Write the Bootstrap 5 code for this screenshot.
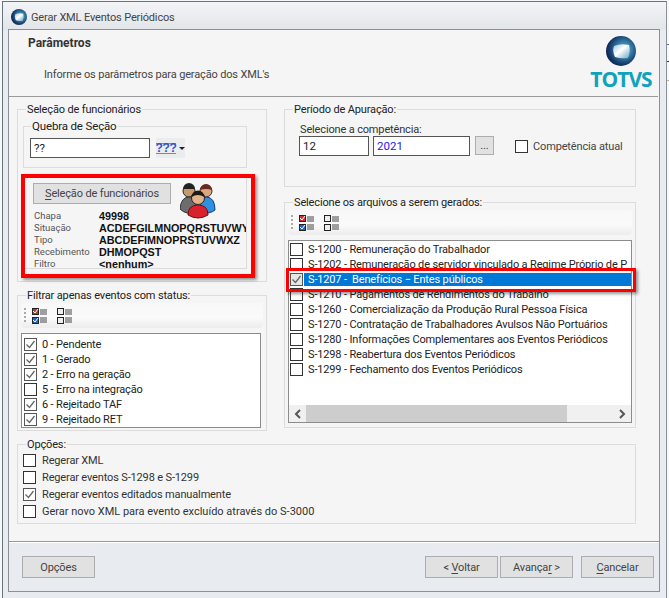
<!DOCTYPE html>
<html lang="pt-BR">
<head>
<meta charset="utf-8">
<title>Gerar XML Eventos Periódicos</title>
<link href="https://cdn.jsdelivr.net/npm/bootstrap@5.3.0/dist/css/bootstrap.min.css" rel="stylesheet">
<style>
html,body{height:598px;overflow:hidden}
body{background-color:#f7f8f9;background-image:linear-gradient(#5a6fb0,#5a6fb0),linear-gradient(#333,#333),linear-gradient(#c9b28a,#c9b28a);background-repeat:no-repeat;background-size:3px 1px;background-position:666px 44px,666px 61px,666px 80px;font-family:Roboto,"Liberation Sans",sans-serif;font-size:11px;letter-spacing:-.15px;line-height:15px;color:#2a2a2a}
.win{width:665px;height:620px;margin:1px 0 0 2px;border:1px solid #69737d;border-right-color:#8a9198;background:linear-gradient(#f3f4f6,#e2e5e9 28px,#e8ebf0 28px);padding-left:5px;position:relative}
.ttl{height:27px;display:flex;align-items:center;gap:4px;padding-left:3px;padding-top:3px;color:#444}
.frm{width:652px;height:563px;border:1px solid #8c8f93;display:flex;flex-direction:column}
.pan{height:512px;flex:none;background:#f5f5f5;border-bottom:1px solid #999;box-shadow:0 1px 0 #fff;display:flex;flex-direction:column}
.hdr{height:67px;flex:none;border-bottom:1px solid #9a9a9a;display:flex;justify-content:space-between;padding:6px 6px 0 19px;margin-right:1px}
.hdr b{font-size:12px;letter-spacing:0;color:#333;display:block}
.hdr p{margin:16px 0 0 16px;color:#444}
.brand{width:62px;display:flex;flex-direction:column;align-items:center;color:#0ea2bd;font:700 21px/18px "Open Sans",sans-serif;letter-spacing:-1px}
.bdy{display:flex;gap:17px;padding:5px 0 0 8px}
.cl{width:250px;flex:none}.cr{width:352px;flex:none}
fieldset.grp{border:1px solid #dcdcdc;padding:0;margin:0}
fieldset.grp>legend{float:none;width:auto;font-size:11px;line-height:15px;margin:0 0 0 8px;padding:0 1px;color:#222}
.g1{height:180px}.g2{height:143px;margin-top:6px!important}
.g3{height:85px}.g4{height:233px;margin-top:8px!important}
.g5{height:87px;width:619px;margin:6px 0 0 8px!important}
.g11{height:49px;margin:2px 0 0 5px!important;width:224px}
.g11 legend{font-size:11.5px!important;margin-left:7px!important}
.inp{height:20px;border:1px solid #555;border-radius:0;background:#fff;font-size:11.5px;line-height:17px;padding:0 3px;color:#222;min-height:0;box-shadow:none}
.qline{display:flex;gap:6px;padding:4px 0 0 6px}
.qbtn{width:29px;height:20px;background:#ebecee;display:flex;align-items:center;justify-content:center;gap:3px;font:700 12px/11px "Liberation Sans",sans-serif;color:#2f55c4;padding:0}
.qbtn span{border-top:1px solid #6b88d6;border-bottom:1px solid #6b88d6;line-height:9px;letter-spacing:-.4px}
.qbtn i{border:3px solid transparent;border-top:3px solid #222;border-bottom:0;width:0;height:0}
.sel{width:224px;height:95px;margin:6px 0 0 5px;border-right:1px solid #dcdcdc;border-bottom:1px solid #dcdcdc;overflow:hidden;padding:9px 0 0 10px}
.selt{display:flex;gap:9px;height:29px;align-items:flex-start}
.bx{border:1px solid #adadad;background:#e1e1e1;border-radius:0;color:#444;font-size:11px;letter-spacing:-.15px;line-height:15px;padding:0;--bs-btn-hover-bg:#e1e1e1}
.bsel{width:138px;height:21px}
.info{margin:-2px 0 0 1px;white-space:nowrap;font-size:9.5px;line-height:12px;letter-spacing:0}
.info>div{display:flex}
.info span{width:65px;flex:none;color:#555}
.info b{font:700 10.8px/12px "Liberation Sans",sans-serif;color:#111}
.tb{height:25px;margin:0 3px;border-radius:4px;background:linear-gradient(#f8f8f8,#fafafa 60%,#ececec);display:flex;align-items:center;gap:6px;padding-left:3px}
.tb .grip{width:2px;height:15px;background:repeating-linear-gradient(#aaa 0 2px,transparent 2px 4px)}
.tb .unc{margin-left:3px}
.lst{background:#fff;border:1px solid #8c8c8c;list-style:none;margin:0;padding:3px 0 0 2px;overflow:hidden;white-space:nowrap}
.lst li{height:15px;display:flex;align-items:center;gap:5px;color:#222}
.l1{height:95px;margin:5px 5px 0 3px}
.l2{height:183px;margin:5px 3px 0 3px;display:flex;flex-direction:column;padding:0}
.l2 ul{list-style:none;margin:0;padding:1px 0 0 1px;flex:1;overflow:hidden}
.form-check-input.ck{flex:none;width:13px;height:13px;margin:0;border:1px solid #333;border-radius:0;background-color:#fff;box-shadow:none;opacity:1}
.form-check-input.ck:checked{background-color:#fff;border-color:#555;background-size:11px;background-image:url("data:image/svg+xml,%3Csvg xmlns='http://www.w3.org/2000/svg' viewBox='0 0 11 11'%3E%3Cpath d='M1.5 5.500l3 3 5-6.500' fill='none' stroke='%23666' stroke-width='1.3'/%3E%3C/svg%3E")}
.form-check-input.ck.hl:checked{background-color:#e6e6e6}
.on{background:#0078d7;color:#fff;flex:1;padding-left:4px;height:13px;line-height:13px}
.scr{height:17px;flex:none;background:#f0f0f0;display:flex;align-items:center;color:#555}
.scr svg{flex:none;margin:0 5px}
.scr .thm{width:261px;height:17px;background:#cdcdcd;margin:0 auto 0 -1px}
.per{display:flex;gap:4px;padding:0 0 0 14px}
.cap{margin:5px 0 0 15px;padding:0;height:14px;color:#333}
.per label{white-space:nowrap;display:flex;align-items:center;gap:5px;margin-left:17px;height:20px;color:#444}
.opt{padding:0 0 0 5px}
.opt label{display:flex;align-items:center;gap:6px;height:17px;color:#333}
.opt .wide{letter-spacing:0}
.ftr{display:flex;flex:1;padding:14px 5px 0 13px}
.ftr .bx{width:73px;height:22px}
.mk{position:absolute;border:4px solid #f00;box-shadow:2px 2px 3px rgba(0,0,0,.4);pointer-events:none}
.m1{left:18px;top:172px;width:234px;height:104px}
.m2{left:283px;top:266px;width:350px;height:24px;border-width:3px}
u{text-underline-offset:2px}
</style>
</head>
<body>
<svg width="0" height="0" class="d-block" style="height:0">
<defs>
<radialGradient id="sph" cx=".6" cy=".45" r=".65"><stop offset=".35" stop-color="#3a86ad"/><stop offset=".75" stop-color="#163a6b"/><stop offset="1" stop-color="#0b1c3f"/></radialGradient>
<linearGradient id="sq" x1="0" y1="0" x2="1" y2="1"><stop offset="0" stop-color="#9fc3d8"/><stop offset=".45" stop-color="#fff"/><stop offset="1" stop-color="#6aa6c6"/></linearGradient>
<symbol id="orb" viewBox="0 0 30 30"><circle cx="15" cy="15" r="15" fill="url(#sph)"/><path d="M8 10Q15 7 23 9Q25 15 22 22Q15 23 9 21Q6 15 8 10Z" fill="url(#sq)"/></symbol>
<symbol id="chk" viewBox="0 0 16 16"><rect x=".5" y=".5" width="6" height="6" fill="#c33" stroke="#222"/><path d="M1 3l2 2 3-4" fill="none" stroke="#fff"/><rect x=".5" y="9.500" width="6" height="6" fill="#26c" stroke="#222"/><path d="M1 12l2 2 3-4" fill="none" stroke="#fff"/><path d="M8 2h7M8 4h7M8 6h7M8 10h7M8 12h7M8 14h7" stroke="#444"/></symbol>
<symbol id="unc" viewBox="0 0 16 16"><rect x=".5" y=".5" width="6" height="6" fill="#eee" stroke="#222"/><rect x=".5" y="9.500" width="6" height="6" fill="#eee" stroke="#222"/><path d="M8 2h7M8 4h7M8 6h7M8 10h7M8 12h7M8 14h7" stroke="#444"/></symbol>
</defs>
</svg>
<div class="win">
<div class="ttl"><svg width="16" height="16"><use href="#orb"/></svg><span>Gerar XML Eventos Periódicos</span></div>
<div class="frm">
<div class="pan">
<div class="hdr">
<div><b>Parâmetros</b><p>Informe os parâmetros para geração dos XML's</p></div>
<div class="brand"><svg width="30" height="30" class="mb-1"><use href="#orb"/></svg><span>TOTVS</span></div>
</div>
<div class="bdy">
<div class="cl">
<fieldset class="grp g1"><legend>Seleção de funcionários</legend>
<fieldset class="grp g11"><legend>Quebra de Seção</legend>
<div class="qline"><input class="form-control inp" style="width:120px" value="??" aria-label="Quebra"><div class="qbtn"><span>???</span><i></i></div></div>
</fieldset>
<div class="sel">
<div class="selt"><button class="btn bx bsel"><u>S</u>eleção de funcionários</button>
<svg width="36" height="36" viewBox="0 0 36 36"><circle cx="9" cy="8" r="6" fill="#c79a6c" stroke="#222"/><path d="M3 6a6 6 0 0 1 12 0z" fill="#222"/><path d="M0 26Q1 14 9 14Q14 14 16 20V30Q6 32 0 26Z" fill="#6d6d6d" stroke="#333"/><circle cx="26" cy="8" r="6" fill="#d9a77c" stroke="#522"/><path d="M20 7a6 6 0 0 1 12 0q-6-2-12 0z" fill="#6b2a20"/><path d="M20 20Q22 14 27 14Q35 15 35 27Q30 31 22 30Z" fill="#2f8fe0" stroke="#123a7a"/><circle cx="18" cy="15" r="6.500" fill="#e3b48b" stroke="#222"/><path d="M11.500 14a6.500 6.500 0 0 1 13 0q-7-4-13 0z" fill="#1f1a17"/><path d="M8 32Q8 22 18 22Q28 22 28 32Q18 38 8 32Z" fill="#d8222c" stroke="#611"/></svg></div>
<div class="info">
<div><span>Chapa</span><b>49998</b></div>
<div><span>Situação</span><b>ACDEFGILMNOPQRSTUVWY</b></div>
<div><span>Tipo</span><b>ABCDEFIMNOPRSTUVWXZ</b></div>
<div><span>Recebimento</span><b>DHMOPQST</b></div>
<div><span>Filtro</span><b>&lt;nenhum&gt;</b></div>
</div>
</div>
</fieldset>
<fieldset class="grp g2"><legend>Filtrar apenas eventos com status:</legend>
<div class="tb"><i class="grip"></i><svg width="16" height="16"><use href="#chk"/></svg><svg width="16" height="16" class="unc"><use href="#unc"/></svg></div>
<ul class="lst l1">
<li><input class="form-check-input ck" type="checkbox" checked aria-label="0"><span>0 - Pendente</span></li>
<li><input class="form-check-input ck" type="checkbox" checked aria-label="1"><span>1 - Gerado</span></li>
<li><input class="form-check-input ck" type="checkbox" checked aria-label="2"><span>2 - Erro na geração</span></li>
<li><input class="form-check-input ck" type="checkbox" aria-label="5"><span>5 - Erro na integração</span></li>
<li><input class="form-check-input ck" type="checkbox" checked aria-label="6"><span>6 - Rejeitado TAF</span></li>
<li><input class="form-check-input ck" type="checkbox" checked aria-label="9"><span>9 - Rejeitado RET</span></li>
</ul>
</fieldset>
</div>
<div class="cr">
<fieldset class="grp g3"><legend>Período de Apuração:</legend>
<div class="cap">Selecione a competência:</div>
<div class="per">
<input class="form-control inp" style="width:70px" value="12" aria-label="Mês">
<input class="form-control inp" style="width:97px;color:#22e" value="2021" aria-label="Ano">
<button class="btn bx" style="width:19px;height:19px;line-height:12px;margin-left:1px">...</button>
<label><input class="form-check-input ck" type="checkbox"> Competência atual</label>
</div>
</fieldset>
<fieldset class="grp g4"><legend>Selecione os arquivos a serem gerados:</legend>
<div class="tb"><i class="grip"></i><svg width="16" height="16"><use href="#chk"/></svg><svg width="16" height="16" class="unc"><use href="#unc"/></svg></div>
<div class="lst l2">
<ul>
<li><input class="form-check-input ck" type="checkbox" aria-label="1200"><span>S-1200 - Remuneração do Trabalhador</span></li>
<li><input class="form-check-input ck" type="checkbox" aria-label="1202"><span>S-1202 - Remuneração de servidor vinculado a Regime Próprio de P</span></li>
<li style="gap:1px"><input class="form-check-input ck hl" type="checkbox" checked aria-label="1207"><span class="on">S-1207 -&nbsp; Benefícios − Entes públicos</span></li>
<li><input class="form-check-input ck" type="checkbox" aria-label="1210"><span>S-1210 - Pagamentos de Rendimentos do Trabalho</span></li>
<li><input class="form-check-input ck" type="checkbox" aria-label="1260"><span>S-1260 - Comercialização da Produção Rural Pessoa Física</span></li>
<li><input class="form-check-input ck" type="checkbox" aria-label="1270"><span>S-1270 - Contratação de Trabalhadores Avulsos Não Portuários</span></li>
<li><input class="form-check-input ck" type="checkbox" aria-label="1280"><span>S-1280 - Informações Complementares aos Eventos Periódicos</span></li>
<li><input class="form-check-input ck" type="checkbox" aria-label="1298"><span>S-1298 - Reabertura dos Eventos Periódicos</span></li>
<li><input class="form-check-input ck" type="checkbox" aria-label="1299"><span>S-1299 - Fechamento dos Eventos Periódicos</span></li>
</ul>
<div class="scr"><svg width="8" height="10" viewBox="0 0 8 10"><path d="M6 1L2 5l4 4" fill="none" stroke="#555" stroke-width="2"/></svg><div class="thm"></div><svg width="8" height="10" viewBox="0 0 8 10"><path d="M2 1l4 4-4 4" fill="none" stroke="#555" stroke-width="2"/></svg></div>
</div>
</fieldset>
</div>
</div>
<fieldset class="grp g5"><legend>Opções:</legend>
<div class="opt">
<label><input class="form-check-input ck" type="checkbox"> Regerar XML</label>
<label><input class="form-check-input ck" type="checkbox"> Regerar eventos S-1298 e S-1299</label>
<label><input class="form-check-input ck" type="checkbox" checked> Regerar eventos editados manualmente</label>
<label class="wide"><input class="form-check-input ck" type="checkbox"> Gerar novo XML para evento excluído através do S-3000</label>
</div>
</fieldset>
</div>
<div class="ftr">
<button class="btn bx">Opções</button>
<button class="btn bx" style="margin-left:330px">&lt; <u>V</u>oltar</button>
<button class="btn bx" style="margin-left:2px">Avança<u>r</u> &gt;</button>
<button class="btn bx" style="margin-left:8px"><u>C</u>ancelar</button>
</div>
</div>
<div class="mk m1"></div>
<div class="mk m2"></div>
</div>
</body>
</html>
